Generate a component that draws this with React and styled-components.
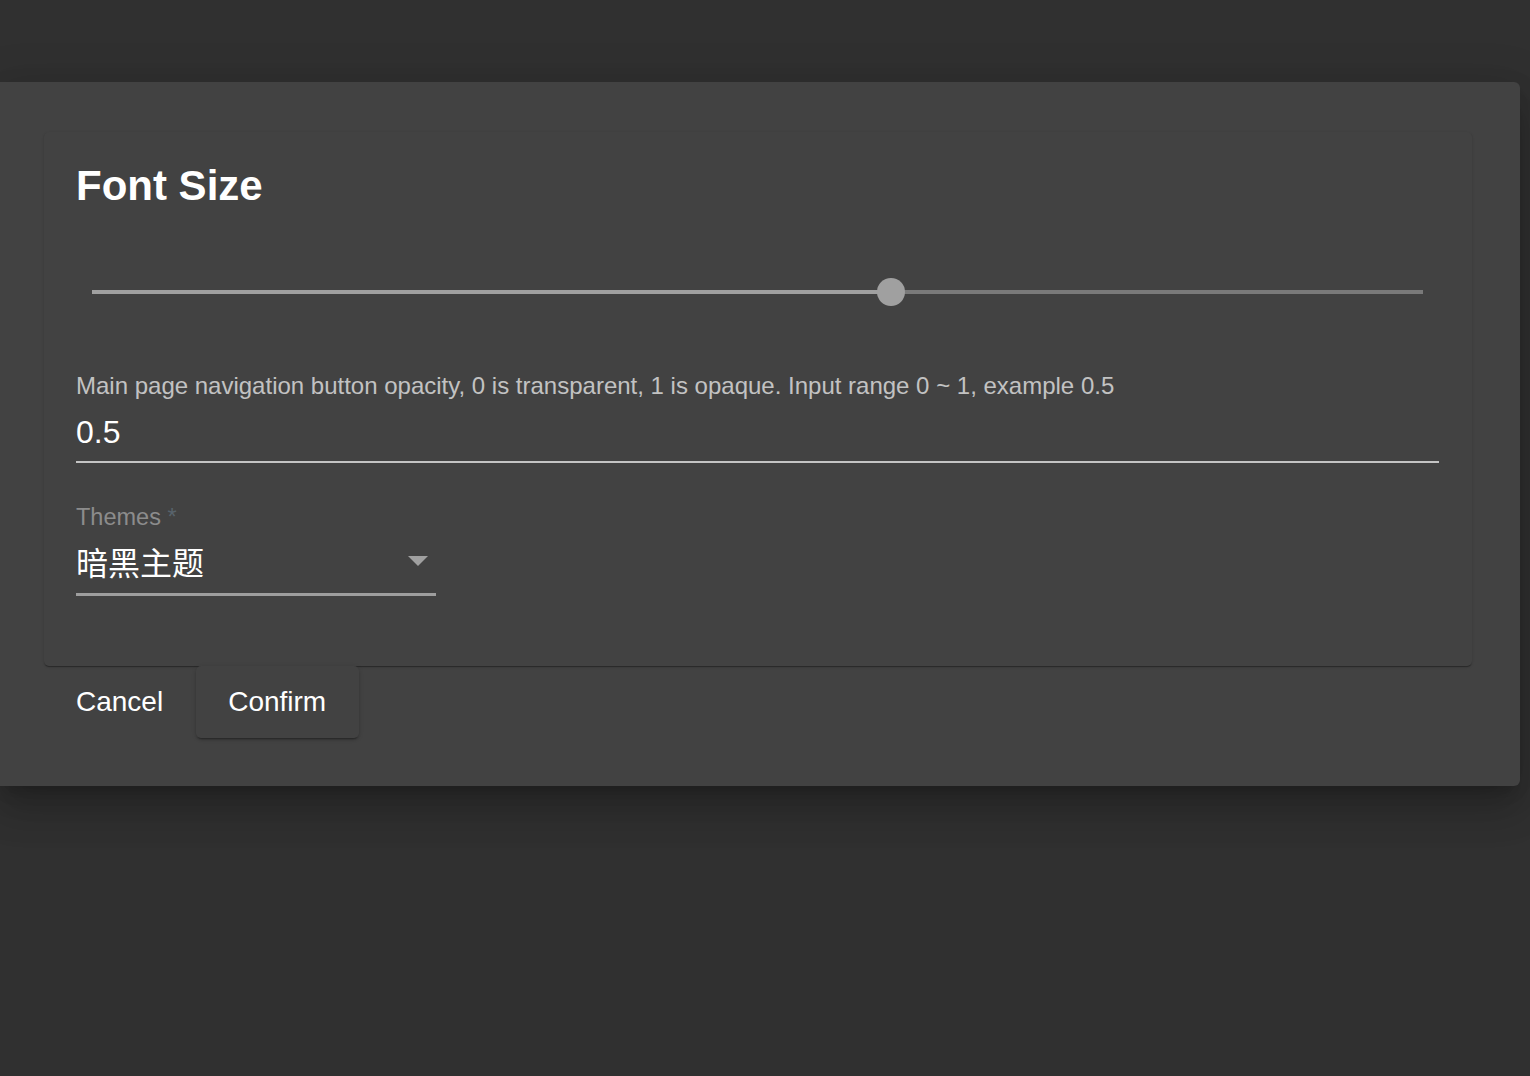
import React from 'react'
import styled, {createGlobalStyle} from 'styled-components'

const GlobalStyle = createGlobalStyle`
  html, body {
    margin: 0;
    padding: 0;
    background: #303030;
  }
  body {
    font-family: 'Liberation Sans', Arial, 'Noto Sans CJK SC', sans-serif;
    min-height: 1076px;
  }
`

const Page = styled.div`
  min-height: 1076px;
  padding-top: 82px;
  box-sizing: border-box;
`

const Dialog = styled.div`
  width: 1520px;
  box-sizing: border-box;
  background: #424242;
  border-radius: 0 6px 6px 0;
  padding: 50px 48px 48px 44px;
  box-shadow: 0 11px 15px -7px rgba(0,0,0,0.2), 0 24px 38px 3px rgba(0,0,0,0.14), 0 9px 46px 8px rgba(0,0,0,0.12);
`

const Card = styled.div`
  background: #424242;
  border-radius: 5px;
  padding: 30px 33px 70px 32px;
  box-shadow: 0 2px 1px -1px rgba(0,0,0,0.2), 0 1px 1px 0 rgba(0,0,0,0.14), 0 1px 3px 0 rgba(0,0,0,0.12);
`

const Title = styled.h2`
  margin: 0;
  font-size: 42px;
  line-height: 48px;
  font-weight: 700;
  color: #fff;
`

const SliderWrap = styled.div`
  position: relative;
  height: 60px;
  margin: 52px 16px 0;
  display: flex;
  align-items: center;
`

const Track = styled.div`
  height: 4px;
  background: ${p => p.$active ? '#a0a0a0' : '#7a7a7a'};
  flex: ${p => p.$grow};
`

const Thumb = styled.div`
  position: absolute;
  top: 16px;
  width: 28px;
  height: 28px;
  margin-left: -14px;
  border-radius: 50%;
  background: #a0a0a0;
`

const Field = styled.div`
  margin-top: ${p => p.$top}px;
  width: ${p => p.$width || 'auto'};
`

const Label = styled.div`
  font-size: ${p => p.$size}px;
  line-height: 28px;
  margin-bottom: ${p => p.$gap}px;
  color: ${p => p.$color};
  white-space: nowrap;
`

const Star = styled.span`
  color: #58636b;
`

const InputLine = styled.div`
  display: flex;
  align-items: center;
  justify-content: space-between;
  height: 40px;
  padding-bottom: ${p => p.$pb}px;
  border-bottom: ${p => p.$bw}px solid ${p => p.$bc};
  color: #fff;
`

const Value = styled.span`
  font-size: ${p => p.$size}px;
  font-family: 'Liberation Sans', Arial, 'Noto Sans CJK SC', sans-serif;
`

const Caret = styled.div`
  width: 0;
  height: 0;
  margin-right: 8px;
  border-left: 10px solid transparent;
  border-right: 10px solid transparent;
  border-top: 10px solid #a0a0a0;
`

const Actions = styled.div`
  display: flex;
`

const Button = styled.button`
  height: 72px;
  padding: 0 33px 0 32px;
  border: none;
  border-radius: 5px;
  font-family: 'Liberation Sans', Arial, sans-serif;
  font-size: 28px;
  color: #fff;
  background: ${p => p.$raised ? '#424242' : 'transparent'};
  box-shadow: ${p => p.$raised ? '0 3px 1px -2px rgba(0,0,0,0.2), 0 2px 2px 0 rgba(0,0,0,0.14), 0 1px 5px 0 rgba(0,0,0,0.12)' : 'none'};
  cursor: pointer;
`

export default function App() {
  const value = 0.6
  return (
    <Page>
      <GlobalStyle/>
      <Dialog>
        <Card>
          <Title>Font Size</Title>
          <SliderWrap>
            <Track $active $grow={value}/>
            <Track $grow={1 - value}/>
            <Thumb style={{left: `${value * 100}%`}}/>
          </SliderWrap>
          <Field $top={50}>
            <Label $size={24} $gap={12} $color='#c2c2c2'>Main page navigation button opacity, 0 is transparent, 1 is opaque. Input range 0 ~ 1, example 0.5</Label>
            <InputLine $pb={9} $bw={2} $bc='#c4c4c4'>
              <Value $size={32}>0.5</Value>
            </InputLine>
          </Field>
          <Field $top={40} $width='360px'>
            <Label $size={23.5} $gap={10} $color='#8c8c8c'>Themes <Star>*</Star></Label>
            <InputLine $pb={12} $bw={3} $bc='#9e9e9e'>
              <Value $size={32}>暗黑主题</Value>
              <Caret/>
            </InputLine>
          </Field>
        </Card>
        <Actions>
          <Button>Cancel</Button>
          <Button $raised>Confirm</Button>
        </Actions>
      </Dialog>
    </Page>
  )
}
